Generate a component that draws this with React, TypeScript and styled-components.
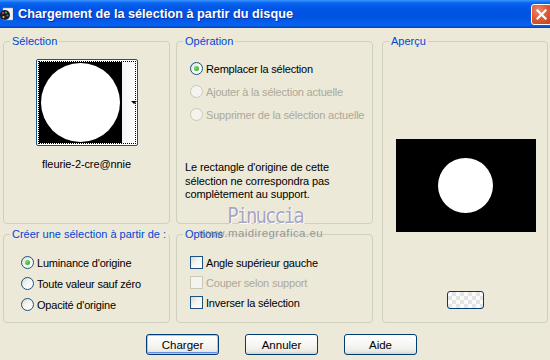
import styled, { createGlobalStyle } from 'styled-components';

const GlobalStyle = createGlobalStyle`
  body {
    margin: 0;
    background: #ece9d8;
    font-family: 'Liberation Sans', Arial, sans-serif;
    font-size: 11px;
    color: #000;
  }
`;

const Window = styled.div`
  position: relative;
  width: 550px;
  height: 360px;
  overflow: hidden;
  background: #ece9d8;
  display: flex;
  flex-direction: column;
`;

const TitleBar = styled.div`
  height: 28px;
  flex: none;
  display: flex;
  align-items: center;
  gap: 5px;
  background: linear-gradient(
    #3d95ff 0%,
    #0a66f0 10%,
    #0055e5 30%,
    #0053e1 60%,
    #0560f0 85%,
    #0a5ee8 92%,
    #003fb8 100%
  );
`;

const TitleText = styled.span`
  font-family: 'Liberation Sans', Arial, sans-serif;
  font-weight: bold;
  font-size: 12.7px;
  color: #fff;
  text-shadow: 1px 1px 0 #0c2d9c;
`;

const CloseButton = styled.div`
  position: absolute;
  left: 531px;
  top: 4px;
  width: 19px;
  height: 19px;
  border: 1px solid #fff;
  border-radius: 3px;
  background: radial-gradient(circle at 35% 30%, #f08a6a 0%, #e05a36 45%, #c2401c 100%);
  display: flex;
  align-items: center;
  justify-content: center;
`;

const Body = styled.div`
  display: grid;
  grid-template-columns: 167px 197px 169px;
  grid-template-rows: 189px 95px;
  column-gap: 6px;
  row-gap: 4px;
  padding: 7px 0 0 3px;
`;

const Group = styled.fieldset<{ $col: number; $row: string; $shift?: number }>`
  margin: 0 0 0 ${(p) => p.$shift ?? 0}px;
  padding: 0;
  min-width: 0;
  border: 1px solid #d0d0bf;
  border-radius: 4px;
  grid-column: ${(p) => p.$col};
  grid-row: ${(p) => p.$row};
  display: flex;
  flex-direction: column;
`;

const Legend = styled.legend`
  margin-left: 6px;
  padding: 0 2px;
  color: #0046d5;
  font-size: 11px;
`;

const SelectionBody = styled.div`
  display: flex;
  flex-direction: column;
  align-items: center;
  padding: 12px 0 0 0;
`;

const Thumb = styled.div`
  border: 1px solid #1c5180;
  border-radius: 2px;
  padding: 1px;
  box-sizing: border-box;
  width: 102px;
  height: 87px;
  background: #fff;
`;

const FocusRect = styled.div`
  height: 100%;
  box-sizing: border-box;
  border: 1px dotted #000;
  display: flex;
`;

const ThumbImage = styled.div`
  width: 83px;
  background: #000;
  display: flex;
  align-items: center;
  justify-content: center;
`;

const ThumbStrip = styled.div`
  flex: 1;
  background: linear-gradient(90deg, #f4f4f4, #fff);
  display: flex;
  align-items: center;
  justify-content: flex-end;
`;

const Circle = styled.div<{ $size: number }>`
  width: ${(p) => p.$size}px;
  height: ${(p) => p.$size}px;
  border-radius: 50%;
  background: #fff;
`;

const Arrow = styled.div`
  width: 0;
  height: 0;
  border-left: 3px solid transparent;
  border-right: 3px solid transparent;
  border-top: 3px solid #000;
  margin-right: -2px;
`;

const FileName = styled.div`
  margin-top: 12px;
  font-size: 11px;
  letter-spacing: -0.1px;
`;

const OptionList = styled.div<{ $top: number; $left: number; $gap: number }>`
  display: flex;
  flex-direction: column;
  gap: ${(p) => p.$gap}px;
  padding: ${(p) => p.$top}px 0 0 ${(p) => p.$left}px;
`;

const OptionRow = styled.label<{ $disabled?: boolean }>`
  display: flex;
  align-items: center;
  gap: 3px;
  height: 15px;
  white-space: nowrap;
  letter-spacing: -0.2px;
  color: ${(p) => (p.$disabled ? '#aca899' : '#000')};
  font-size: 11px;
`;

const RadioDot = styled.span<{ $checked?: boolean; $disabled?: boolean }>`
  flex: none;
  width: 13px;
  height: 13px;
  box-sizing: border-box;
  border-radius: 50%;
  border: 1px solid ${(p) => (p.$disabled ? '#cac8bb' : '#1c5180')};
  background: ${(p) =>
    p.$disabled ? '#f4f3ee' : 'linear-gradient(135deg, #dcdcd6 0%, #f6f6f3 50%, #ffffff 100%)'};
  display: flex;
  align-items: center;
  justify-content: center;
  &::after {
    content: '';
    display: ${(p) => (p.$checked ? 'block' : 'none')};
    width: 5px;
    height: 5px;
    border-radius: 50%;
    background: radial-gradient(circle at 35% 35%, #6fe36f, #21a121);
  }
`;

const CheckBox = styled.span<{ $disabled?: boolean }>`
  flex: none;
  width: 13px;
  height: 13px;
  box-sizing: border-box;
  border: 1px solid ${(p) => (p.$disabled ? '#cac8bb' : '#1c5180')};
  background: ${(p) =>
    p.$disabled ? '#f4f3ee' : 'linear-gradient(135deg, #dcdcd6 0%, #f6f6f3 50%, #ffffff 100%)'};
`;

const Note = styled.p`
  margin: 39px 0 0 8px;
  line-height: 13.5px;
  font-size: 11px;
  letter-spacing: -0.1px;
  white-space: nowrap;
`;

const PreviewBody = styled.div`
  display: flex;
  flex-direction: column;
  align-items: center;
  padding-top: 92px;
  padding-left: 1px;
`;

const PreviewImage = styled.div`
  width: 140px;
  height: 93px;
  background: #000;
  display: flex;
  align-items: center;
  justify-content: center;
`;

const SmallButton = styled.div`
  margin-top: 59px;
  width: 37px;
  height: 18px;
  box-sizing: border-box;
  border: 1px solid #003c74;
  border-radius: 3px;
  background:
    repeating-conic-gradient(#e4e4e4 0 25%, #fafafa 0 50%) 0 0 / 8px 8px;
`;

const ButtonRow = styled.div`
  display: flex;
  gap: 26px;
  padding: 11px 0 0 146px;
`;

const Button = styled.button<{ $default?: boolean }>`
  width: 73px;
  height: 21px;
  padding: 0;
  border: 1px solid #003c74;
  border-radius: 3px;
  background: linear-gradient(#ffffff 0%, #f6f6f3 50%, #ecebe6 85%, #d6d0c5 100%);
  box-shadow: ${(p) =>
    p.$default ? 'inset 0 0 0 1px #a9c8f5, inset 0 -1px 0 1px #6a8ee8' : 'none'};
  font-family: 'Liberation Sans', Arial, sans-serif;
  font-size: 11.5px;
  color: #000;
`;

const Watermark = styled.div`
  position: absolute;
  left: 205px;
  top: 204px;
  width: 120px;
  display: flex;
  flex-direction: column;
  align-items: center;
  pointer-events: none;
`;

const WatermarkName = styled.span`
  font-family: 'DejaVu Sans Mono', monospace;
  font-size: 19px;
  letter-spacing: -2px;
  color: #a6a6c6;
  text-shadow: 0 0 1px #fff, 1px 1px 0 #fff;
  transform: scaleY(1.15);
`;

const WatermarkUrl = styled.span`
  margin-top: 1px;
  margin-left: -8px;
  font-family: 'Liberation Sans', Arial, sans-serif;
  font-size: 11.5px;
  letter-spacing: 0.4px;
  color: rgba(120, 120, 140, 0.75);
`;

const AppIcon = () => (
  <svg width="13" height="14" viewBox="0 0 13 14">
    <rect x="3" y="1" width="10" height="12" fill="#f2f2f2" stroke="#9aa" strokeWidth="0.5" />
    <circle cx="5" cy="8" r="5" fill="#1a1a2a" />
    <circle cx="3" cy="6" r="1.2" fill="#e03030" />
    <circle cx="6" cy="5.5" r="1.1" fill="#30c040" />
    <circle cx="7.5" cy="8.5" r="1.1" fill="#3070ff" />
    <circle cx="3.5" cy="10" r="1.1" fill="#f0d020" />
  </svg>
);

const CloseIcon = () => (
  <svg width="11" height="11" viewBox="0 0 11 11">
    <path d="M1.5 1.5 L9.5 9.5 M9.5 1.5 L1.5 9.5" stroke="#fff" strokeWidth="2.2" strokeLinecap="square" />
  </svg>
);

export default function App() {
  return (
    <Window>
      <GlobalStyle />
      <TitleBar>
        <AppIcon />
        <TitleText>Chargement de la sélection à partir du disque</TitleText>
      </TitleBar>
      <CloseButton>
        <CloseIcon />
      </CloseButton>

      <Body>
        <Group $col={1} $row="1">
          <Legend>Sélection</Legend>
          <SelectionBody>
            <Thumb>
              <FocusRect>
                <ThumbImage>
                  <Circle $size={79} />
                </ThumbImage>
                <ThumbStrip>
                  <Arrow />
                </ThumbStrip>
              </FocusRect>
            </Thumb>
            <FileName>fleurie-2-cre@nnie</FileName>
          </SelectionBody>
        </Group>

        <Group $col={2} $row="1">
          <Legend>Opération</Legend>
          <OptionList $top={14} $left={13} $gap={8}>
            <OptionRow>
              <RadioDot $checked />
              Remplacer la sélection
            </OptionRow>
            <OptionRow $disabled>
              <RadioDot $disabled />
              Ajouter à la sélection actuelle
            </OptionRow>
            <OptionRow $disabled>
              <RadioDot $disabled />
              Supprimer de la sélection actuelle
            </OptionRow>
          </OptionList>
          <Note>
            Le rectangle d'origine de cette
            <br />
            sélection ne correspondra pas
            <br />
            complètement au support.
          </Note>
        </Group>

        <Group $col={3} $row="1 / span 2" $shift={3}>
          <Legend>Aperçu</Legend>
          <PreviewBody>
            <PreviewImage>
              <Circle $size={55} />
            </PreviewImage>
            <SmallButton />
          </PreviewBody>
        </Group>

        <Group $col={1} $row="2">
          <Legend>Créer une sélection à partir de :</Legend>
          <OptionList $top={15} $left={17} $gap={6}>
            <OptionRow>
              <RadioDot $checked />
              Luminance d'origine
            </OptionRow>
            <OptionRow>
              <RadioDot />
              Toute valeur sauf zéro
            </OptionRow>
            <OptionRow>
              <RadioDot />
              Opacité d'origine
            </OptionRow>
          </OptionList>
        </Group>

        <Group $col={2} $row="2">
          <Legend>Options</Legend>
          <OptionList $top={15} $left={13} $gap={5}>
            <OptionRow>
              <CheckBox />
              Angle supérieur gauche
            </OptionRow>
            <OptionRow $disabled>
              <CheckBox $disabled />
              Couper selon support
            </OptionRow>
            <OptionRow>
              <CheckBox />
              Inverser la sélection
            </OptionRow>
          </OptionList>
        </Group>
      </Body>

      <ButtonRow>
        <Button $default>Charger</Button>
        <Button>Annuler</Button>
        <Button>Aide</Button>
      </ButtonRow>

      <Watermark>
        <WatermarkName>Pinuccia</WatermarkName>
        <WatermarkUrl>www.maidiregrafica.eu</WatermarkUrl>
      </Watermark>
    </Window>
  );
}
